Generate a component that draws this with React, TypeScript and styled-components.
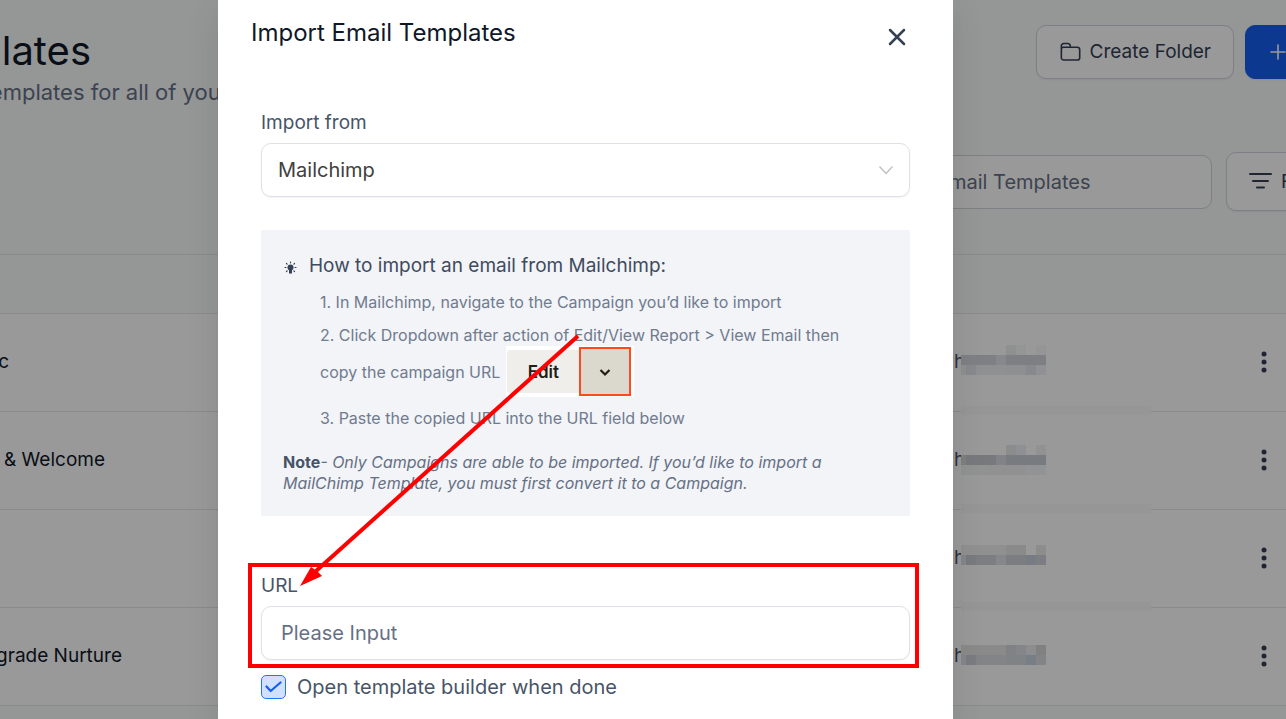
import React from "react";
import styled, { createGlobalStyle } from "styled-components";

const GlobalStyle = createGlobalStyle`
  *, *::before, *::after { box-sizing: border-box; }
  body { margin: 0; background: #f9fafb; font-family: Inter, "Liberation Sans", sans-serif; overflow: hidden; }
  button, input, select { font-family: inherit; }
  h1, h2, h3, p, ol { margin: 0; padding: 0; font-weight: 400; }
`;

const Page = styled.div`
  position: relative;
  height: 100vh;
  overflow: hidden;
`;

const PageHeader = styled.header`
  display: flex;
  justify-content: space-between;
  padding-top: 25px;
`;

const TrailingText = styled.div<{ $width: number }>`
  display: flex;
  justify-content: flex-end;
  width: ${(p) => p.$width}px;
  white-space: nowrap;
`;

const PageTitle = styled.h1`
  font-size: 40px;
  line-height: 52px;
  color: #101828;
`;

const PageSubtitle = styled.p`
  font-size: 22px;
  line-height: 30px;
  color: #667085;
`;

const Actions = styled.div`
  display: flex;
  align-items: flex-start;
  gap: 11px;
  margin-right: -120px;
`;

const Button = styled.button<{ $primary?: boolean; $height?: number; $width: number }>`
  display: flex;
  align-items: center;
  flex: none;
  gap: 8px;
  width: ${(p) => p.$width}px;
  height: ${(p) => p.$height ?? 54}px;
  padding: 0 22px 1px;
  border: 1px solid ${(p) => (p.$primary ? "#155eef" : "#d0d5dd")};
  border-radius: 10px;
  background: ${(p) => (p.$primary ? "#155eef" : "#fff")};
  color: ${(p) => (p.$primary ? "#fff" : "#344054")};
  font-size: 19px;
  font-weight: 400;
  white-space: nowrap;
  box-shadow: 0 1px 2px rgba(16, 24, 40, 0.06);
`;

const SearchBar = styled.div`
  display: flex;
  align-items: center;
  justify-content: flex-end;
  gap: 14px;
  margin: 45px -120px 43px 0;
`;

const SearchInput = styled.input`
  width: 400px;
  height: 54px;
  padding: 0 16px 0 124px;
  border: 1px solid #d0d5dd;
  border-radius: 10px;
  background: #fff;
  font-size: 20px;
  &::placeholder { color: #667085; opacity: 1; }
`;

const Table = styled.table`
  width: 100%;
  border-collapse: collapse;
  border-top: 1px solid #e4e7ec;
  background: #fff;
  font-size: 19px;
  th { height: 59px; background: #f9fafb; border-bottom: 1px solid #e4e7ec; }
  td { height: 98px; padding: 0 0 2px; border-bottom: 1px solid #e4e7ec; }
`;

const NameCell = styled.td`
  color: #101828;
`;

const AuthorText = styled.span`
  display: block;
  padding-left: 36px;
  font-size: 19px;
  color: #475467;
`;

const AuthorCell = styled.td`
  width: 332px;
`;

const MenuCell = styled.td`
  width: 36px;
`;

const MenuButton = styled.button`
  display: flex;
  padding: 0;
  border: 0;
  background: none;
  color: #344054;
`;

const Backdrop = styled.div`
  position: absolute;
  inset: 0;
  display: flex;
  justify-content: center;
  padding-right: 115px;
  background: rgba(0, 0, 0, 0.4);
`;

const Redactions = styled.svg`
  position: absolute;
  top: 345px;
  right: 135px;
`;

const Modal = styled.section`
  position: relative;
  width: 735px;
  padding: 0 43px;
  background: #fff;
  box-shadow: 0 10px 32px rgba(0, 0, 0, 0.1);
`;

const ModalHeader = styled.div`
  display: flex;
  align-items: center;
  justify-content: space-between;
  height: 66px;
  margin: 0 -10px 45px;
`;

const ModalTitle = styled.h2`
  font-size: 24px;
  line-height: 32px;
  color: #101828;
`;

const CloseButton = styled.button`
  display: flex;
  margin-top: 8px;
  padding: 0 10px;
  border: 0;
  background: none;
  color: #344054;
`;

const Label = styled.label`
  display: block;
  margin-bottom: 8px;
  font-size: 19px;
  line-height: 24px;
  color: #475467;
`;

const SelectBox = styled.div`
  display: grid;
  align-items: center;
  > * { grid-area: 1 / 1; }
  > svg { justify-self: end; margin-right: 16px; pointer-events: none; }
`;

const Select = styled.select`
  appearance: none;
  width: 100%;
  height: 54px;
  padding: 0 16px;
  border: 1px solid #dfe1e8;
  border-radius: 10px;
  background: #fff;
  color: #404040;
  font-size: 20px;
  box-shadow: 0 1px 2px rgba(16, 24, 40, 0.05);
`;

const HelpPanel = styled.div`
  margin: 33px 0 47px;
  padding: 22px;
  background: #f2f4f7;
  color: #667085;
`;

const HelpHeading = styled.div`
  display: flex;
  align-items: center;
  gap: 11px;
  color: #344054;
  h3 { font-size: 19px; line-height: 28px; color: #3f4b5f; }
`;

const Steps = styled.ol`
  list-style: none;
  padding: 8px 0 0 37px;
  font-size: 16px;
  line-height: 28px;
  color: #717b8f;
  li + li { margin-top: 5px; }
`;

const StepLine = styled.div`
  display: flex;
  align-items: center;
  gap: 6px;
  margin: -3px 0 7px;
`;

const SplitButton = styled.div`
  display: flex;
  align-items: center;
  height: 51px;
  padding: 0 3px 0 1px;
  background: #fff;
`;

const EditPart = styled.button`
  width: 72px;
  height: 43px;
  padding: 0;
  border: 0;
  border-radius: 3px 0 0 3px;
  background: #efeeea;
  color: #241c15;
  font-size: 17px;
  font-weight: 600;
`;

const ArrowPart = styled.button`
  display: flex;
  align-items: center;
  justify-content: center;
  width: 52px;
  height: 49px;
  padding: 0;
  border: 2px solid #ff4a1f;
  background: #dbd9cd;
  color: #241c15;
`;

const Note = styled.p`
  margin-top: 20px;
  font-size: 16px;
  line-height: 21px;
  font-style: italic;
  strong { font-style: normal; font-weight: 700; color: #475467; }
`;

const UrlField = styled.div`
  margin: 0 -9px 0 -13px;
  padding: 7px 5px 4px 9px;
  border: 4px solid #ff0000;
`;

const TextInput = styled.input`
  display: block;
  width: 100%;
  height: 54px;
  padding: 0 19px;
  border: 1px solid #dfe1e8;
  border-radius: 10px;
  font-size: 20px;
  box-shadow: 0 1px 2px rgba(16, 24, 40, 0.05);
  &::placeholder { color: #667085; opacity: 1; }
`;

const CheckRow = styled.label`
  display: flex;
  align-items: center;
  gap: 11px;
  margin-top: 6px;
  font-size: 20px;
  line-height: 26px;
  color: #475467;
`;

const CheckBox = styled.span`
  display: grid;
  > * { grid-area: 1 / 1; }
  input {
    appearance: none;
    width: 25px;
    height: 24px;
    margin: 0;
    border: 1px solid #2970ff;
    border-radius: 5px;
    background: #d1e0ff;
  }
  svg { place-self: center; pointer-events: none; }
`;

const Arrow = styled.svg`
  position: absolute;
  top: 330px;
  left: 78px;
  pointer-events: none;
`;

const rows = [
  { name: "c", width: 9 },
  { name: "& Welcome", width: 105 },
  { name: "", width: 0 },
  { name: "grade Nurture", width: 122 },
];

type Block = [x: number, y: number, w: number, h: number, fill: string];

const blocks: Block[] = [
  [45, 0, 10, 10, "#8f9090"], [55, 0, 10, 10, "#949594"], [75, 0, 10, 10, "#949594"],
  [0, 10, 35, 10, "#7e8085"], [35, 10, 10, 10, "#86888d"], [45, 10, 40, 10, "#7d7f83"],
  [0, 20, 5, 10, "#8e8f91"], [5, 20, 10, 10, "#87898d"], [15, 20, 30, 10, "#8f9092"],
  [45, 20, 20, 10, "#8d8f91"], [65, 20, 10, 10, "#87898e"], [75, 20, 10, 10, "#8f9194"],
  [45, 100, 10, 10, "#8b8c8c"], [55, 100, 10, 10, "#8e9093"], [75, 100, 10, 10, "#929292"],
  [0, 110, 5, 10, "#7d7f82"], [5, 110, 30, 10, "#77797d"], [35, 110, 10, 10, "#818388"],
  [45, 110, 40, 10, "#787b80"],
  [0, 120, 25, 10, "#919392"], [25, 120, 40, 10, "#919191"], [65, 120, 20, 10, "#929394"],
  [0, 200, 45, 10, "#909090"], [45, 200, 20, 10, "#8a8a8b"], [75, 200, 10, 10, "#8d8d8e"],
  [0, 210, 5, 10, "#84868a"], [5, 210, 10, 10, "#777b80"], [15, 210, 20, 10, "#7d7e82"],
  [35, 210, 10, 10, "#86878a"], [45, 210, 20, 10, "#7c7d80"], [65, 210, 10, 10, "#777b83"],
  [75, 210, 10, 10, "#7d7e84"],
  [0, 300, 45, 10, "#8a8a8b"], [45, 300, 10, 10, "#7f8183"], [55, 300, 10, 10, "#858689"],
  [65, 300, 10, 10, "#8d8d90"], [75, 300, 10, 10, "#818181"],
  [0, 310, 5, 10, "#84868b"], [5, 310, 10, 10, "#7a7c82"], [15, 310, 30, 10, "#828487"],
  [45, 310, 20, 10, "#808386"], [65, 310, 10, 10, "#787e85"], [75, 310, 10, 10, "#838485"],
  [0, 61, 190, 9, "#969696"], [0, 159, 190, 9, "#969696"], [0, 257, 190, 9, "#969696"],
];

export default function App() {
  return (
    <Page>
      <GlobalStyle />
      <PageHeader>
        <div>
          <TrailingText $width={91}><PageTitle>lates</PageTitle></TrailingText>
          <TrailingText $width={229}><PageSubtitle>emplates for all of your</PageSubtitle></TrailingText>
        </div>
        <Actions>
          <Button $width={198}>
            <svg width="24" height="24" viewBox="0 0 24 24" fill="none" stroke="currentColor" strokeWidth="1.7" strokeLinejoin="round">
              <path d="M2.500 7V5.500A2.500 2.500 0 0 1 5 3h4.500A2.500 2.500 0 0 1 12 5.500c0 .8.400 1.500 1.500 1.500H19.500A2.500 2.500 0 0 1 22 9.500v8.500A2.500 2.500 0 0 1 19.500 20.500H5A2.500 2.500 0 0 1 2.500 18zM2.500 9A2 2 0 0 1 4.500 7H14" />
            </svg>
            Create Folder
          </Button>
          <Button $primary $width={161} aria-label="Add">
            <svg width="20" height="20" viewBox="0 0 20 20" fill="none" stroke="currentColor" strokeWidth="1.6" strokeLinecap="round">
              <path d="M10 3v14M3 10h14" />
            </svg>
          </Button>
        </Actions>
      </PageHeader>
      <SearchBar>
        <SearchInput aria-label="Search" placeholder="Email Templates" />
        <Button $height={59} $width={180}>
          <svg width="24" height="24" viewBox="0 0 24 24" fill="none" stroke="currentColor" strokeWidth="2" strokeLinecap="round">
            <path d="M1 5h21M4 12h15M8 18.500h7" />
          </svg>
          F
        </Button>
      </SearchBar>
      <Table>
        <thead><tr><th colSpan={3} /></tr></thead>
        <tbody>
          {rows.map(({ name, width }, i) => (
            <tr key={i}>
              <NameCell><TrailingText $width={width}>{name}</TrailingText></NameCell>
              <AuthorCell><AuthorText>h</AuthorText></AuthorCell>
              <MenuCell>
                <MenuButton aria-label="More">
                  <svg width="28" height="28" viewBox="0 0 28 28" fill="currentColor">
                    <circle cx="14" cy="6" r="2.500" /><circle cx="14" cy="14" r="2.500" /><circle cx="14" cy="22" r="2.500" />
                  </svg>
                </MenuButton>
              </MenuCell>
            </tr>
          ))}
        </tbody>
      </Table>
      <Backdrop>
        <Redactions width="190" height="340" shapeRendering="crispEdges" aria-hidden="true">
          {blocks.map(([x, y, w, h, fill], i) => <rect key={i} x={x} y={y} width={w} height={h} fill={fill} />)}
        </Redactions>
        <Modal role="dialog" aria-labelledby="import-title">
          <ModalHeader>
            <ModalTitle id="import-title">Import Email Templates</ModalTitle>
            <CloseButton aria-label="Close">
              <svg width="26" height="26" viewBox="0 0 26 26" fill="none" stroke="currentColor" strokeWidth="2.500" strokeLinecap="round">
                <path d="M6 6l14 14M20 6L6 20" />
              </svg>
            </CloseButton>
          </ModalHeader>
          <Label htmlFor="source">Import from</Label>
          <SelectBox>
            <Select id="source"><option>Mailchimp</option></Select>
            <svg width="16" height="16" viewBox="0 0 16 16" fill="none" stroke="#bfbfbf" strokeWidth="1.400">
              <path d="M1.500 4.500l6.500 7 6.500-7" />
            </svg>
          </SelectBox>
          <HelpPanel>
            <HelpHeading>
              <svg width="15" height="15" viewBox="0 0 15 15" fill="currentColor" stroke="currentColor" strokeWidth="1.200" strokeLinecap="round">
                <circle cx="7.500" cy="8.500" r="3" stroke="none" />
                <path d="M6 10.500h3v4H6z" stroke="none" />
                <path d="M7.500 3v.8M2 8.500h1M12 8.500h1M3.500 4.500l.6.6M11.500 4.500l-.6.6M3.500 12.500l.6-.6M11.500 12.500l-.6-.6" />
              </svg>
              <h3>How to import an email from Mailchimp:</h3>
            </HelpHeading>
            <Steps>
              <li>1. In Mailchimp, navigate to the Campaign you’d like to import</li>
              <li>
                2. Click Dropdown after action of Edit/View Report &gt; View Email then
                <StepLine>
                  copy the campaign URL
                  <SplitButton>
                    <EditPart>Edit</EditPart>
                    <ArrowPart aria-label="More actions">
                      <svg width="12" height="12" viewBox="0 0 12 12" fill="none" stroke="currentColor" strokeWidth="2.200">
                        <path d="M1.500 4L6 8.500 10.500 4" />
                      </svg>
                    </ArrowPart>
                  </SplitButton>
                </StepLine>
              </li>
              <li>3. Paste the copied URL into the URL field below</li>
            </Steps>
            <Note>
              <strong>Note</strong>- Only Campaigns are able to be imported. If you’d like to import a MailChimp Template, you must first convert it to a Campaign.
            </Note>
          </HelpPanel>
          <UrlField>
            <Label htmlFor="url">URL</Label>
            <TextInput id="url" placeholder="Please Input" />
          </UrlField>
          <CheckRow>
            <CheckBox>
              <input type="checkbox" defaultChecked />
              <svg width="17" height="12" viewBox="0 0 17 12" fill="none" stroke="#155eef" strokeWidth="2.200" strokeLinecap="round" strokeLinejoin="round">
                <path d="M1.500 5.500l4.200 4.500L15.500 1.500" />
              </svg>
            </CheckBox>
            Open template builder when done
          </CheckRow>
          <Arrow width="290" height="260" viewBox="0 0 290 260">
            <path d="M282 6L20 241" stroke="#ff0000" strokeWidth="4" />
            <path d="M4 256L15 237L21 241L26 246z" fill="#ff0000" />
          </Arrow>
        </Modal>
      </Backdrop>
    </Page>
  );
}
